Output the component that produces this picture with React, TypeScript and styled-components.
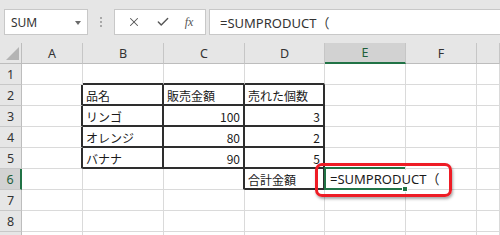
import React from 'react';
import styled, { createGlobalStyle } from 'styled-components';
import { X, Check } from 'lucide-react';

const GlobalStyle = createGlobalStyle`
  html, body {
    margin: 0;
    padding: 0;
    background: #ffffff;
    font-family: "Noto Sans", "Noto Sans CJK JP", sans-serif;
  }
  * { box-sizing: border-box; }
`;

const GREEN = '#217346';
const GRID = '#dadada';
const INK = '#333333';

const Page = styled.div`
  width: 500px;
  height: 235px;
  overflow: hidden;
  background: #ffffff;
`;

const Toolbar = styled.div`
  height: 43px;
  display: flex;
  align-items: flex-start;
  padding: 9px 0 0 4px;
  background: #e6e6e6;
`;

const NameBox = styled.div`
  width: 84px;
  height: 26px;
  display: flex;
  align-items: center;
  justify-content: space-between;
  padding: 0 6px 0 6px;
  background: #ffffff;
  border: 1px solid #c8c8c8;
  font-size: 12px;
  color: ${INK};
`;

const Caret = styled.span`
  width: 0;
  height: 0;
  border-left: 3px solid transparent;
  border-right: 3px solid transparent;
  border-top: 4px solid #6a6a6a;
  margin-top: 1px;
`;

const Grip = styled.div`
  width: 26px;
  height: 26px;
  display: flex;
  flex-direction: column;
  align-items: center;
  justify-content: center;
  gap: 2px;
`;

const Dot = styled.span`
  width: 2px;
  height: 2px;
  background: #a8a8a8;
`;

const ButtonGroup = styled.div`
  width: 92px;
  height: 26px;
  display: flex;
  align-items: center;
  justify-content: space-around;
  padding: 0 4px;
  background: #ffffff;
  border: 1px solid #c8c8c8;
  color: #555555;
`;

const Fx = styled.span`
  font-family: "Liberation Serif", serif;
  font-style: italic;
  font-size: 12px;
  color: #555555;
`;

const FormulaInput = styled.div`
  flex: 1;
  height: 26px;
  margin-left: 3px;
  display: flex;
  align-items: center;
  padding-left: 10px;
  background: #ffffff;
  border: 1px solid #c8c8c8;
  border-right: none;
  font-size: 13px;
  color: ${INK};
  white-space: nowrap;
`;

const Sheet = styled.div`
  position: relative;
  height: 192px;
  overflow: hidden;
  display: grid;
  grid-template-columns: 22px 61px 81px 81px 80px 81px 71px 1fr;
  grid-auto-rows: 21px;
`;

const Corner = styled.div`
  display: flex;
  align-items: flex-end;
  justify-content: flex-end;
  padding: 0 2px 3px 0;
  background: #e6e6e6;
  border-right: 1px solid #bdbdbd;
  border-bottom: 1px solid #bdbdbd;
`;

const ColHead = styled.div<{ $active?: boolean }>`
  display: flex;
  align-items: center;
  justify-content: center;
  font-size: 12.5px;
  color: ${(p) => (p.$active ? '#1d5e3a' : INK)};
  background: ${(p) => (p.$active ? '#d2d2d2' : '#e6e6e6')};
  border-right: 1px solid #c6c6c6;
  border-bottom: ${(p) => (p.$active ? `2px solid ${GREEN}` : '1px solid #bdbdbd')};
`;

const RowHead = styled.div<{ $active?: boolean }>`
  display: flex;
  align-items: center;
  justify-content: center;
  font-size: 12.5px;
  color: ${(p) => (p.$active ? '#1d5e3a' : INK)};
  background: ${(p) => (p.$active ? '#d2d2d2' : '#e6e6e6')};
  border-right: ${(p) => (p.$active ? `2px solid ${GREEN}` : '1px solid #bdbdbd')};
  border-bottom: 1px solid #c8c8c8;
`;

const Cell = styled.div<{ $right?: boolean; $boldR?: boolean; $boldB?: boolean }>`
  position: relative;
  display: flex;
  align-items: center;
  justify-content: ${(p) => (p.$right ? 'flex-end' : 'flex-start')};
  padding: 1px 3px 0 3px;
  font-family: "Noto Sans CJK JP", sans-serif;
  font-size: 12px;
  color: #1a1a1a;
  white-space: nowrap;
  border-right: ${(p) => (p.$boldR ? '2px solid #2e2e2e' : `1px solid ${GRID}`)};
  border-bottom: ${(p) => (p.$boldB ? '2px solid #2e2e2e' : `1px solid ${GRID}`)};
`;

const EditText = styled.span`
  position: relative;
  z-index: 2;
  padding: 0 10px 0 1px;
  margin-left: 1px;
  background: #ffffff;
  font-family: "Noto Sans", "Noto Sans CJK JP", sans-serif;
  font-size: 13px;
  line-height: 19px;
  color: #1a1a1a;
`;

const Selection = styled.div`
  position: absolute;
  z-index: 3;
  top: -2px;
  left: -1px;
  right: 0;
  bottom: -1px;
  border: 2px solid ${GREEN};
  border-right: none;
  pointer-events: none;
`;

const FillHandle = styled.span`
  position: absolute;
  right: -3px;
  bottom: -4px;
  width: 6px;
  height: 6px;
  background: ${GREEN};
  border: 1px solid #ffffff;
`;

const Highlight = styled.div`
  position: absolute;
  z-index: 4;
  left: 315px;
  top: 120px;
  width: 137px;
  height: 34px;
  border: 3px solid #ee1c25;
  border-radius: 7px;
  box-shadow: 1px 2px 3px rgba(0, 0, 0, 0.35);
  pointer-events: none;
`;

const columns = ['A', 'B', 'C', 'D', 'E', 'F', ''];

type Value = string | number;

const data: Record<number, Record<number, Value>> = {
  2: { 1: '品名', 2: '販売金額', 3: '売れた個数' },
  3: { 1: 'リンゴ', 2: 100, 3: 3 },
  4: { 1: 'オレンジ', 2: 80, 3: 2 },
  5: { 1: 'バナナ', 2: 90, 3: 5 },
  6: { 3: '合計金額' },
};

const FORMULA = '=SUMPRODUCT（';

const boldRight = (r: number, c: number) =>
  (r >= 2 && r <= 5 && c <= 3) || (r === 6 && (c === 2 || c === 3));

const boldBottom = (r: number, c: number) =>
  (r >= 1 && r <= 5 && c >= 1 && c <= 3) || (r === 6 && c === 3);

// row 9 is only a sliver at the bottom edge, so its number is not drawn
const rows = [1, 2, 3, 4, 5, 6, 7, 8, 9];
const labelOf = (r: number) => (r < 9 ? r : '');

export default function App() {
  return (
    <Page>
      <GlobalStyle />
      <Toolbar>
        <NameBox>
          SUM
          <Caret />
        </NameBox>
        <Grip>
          <Dot />
          <Dot />
          <Dot />
        </Grip>
        <ButtonGroup>
          <X size={14} strokeWidth={1.8} />
          <Check size={14} strokeWidth={2.4} />
          <Fx>fx</Fx>
        </ButtonGroup>
        <FormulaInput>{FORMULA}</FormulaInput>
      </Toolbar>

      <Sheet>
        <Corner>
          <svg width="13" height="13" viewBox="0 0 13 13">
            <polygon points="13,0 13,13 0,13" fill="#b4b4b4" />
          </svg>
        </Corner>
        {columns.map((c, i) => (
          <ColHead key={i} $active={c === 'E'}>
            {c}
          </ColHead>
        ))}

        {rows.map((r) => (
          <React.Fragment key={r}>
            <RowHead $active={r === 6}>{labelOf(r)}</RowHead>
            {columns.map((_, c) => {
              const v = data[r]?.[c];
              const editing = r === 6 && c === 4;
              return (
                <Cell
                  key={c}
                  $right={typeof v === 'number'}
                  $boldR={boldRight(r, c)}
                  $boldB={boldBottom(r, c)}
                >
                  {editing ? (
                    <>
                      <EditText>{FORMULA}</EditText>
                      <Selection>
                        <FillHandle />
                      </Selection>
                    </>
                  ) : (
                    v
                  )}
                </Cell>
              );
            })}
          </React.Fragment>
        ))}

        <Highlight />
      </Sheet>
    </Page>
  );
}
